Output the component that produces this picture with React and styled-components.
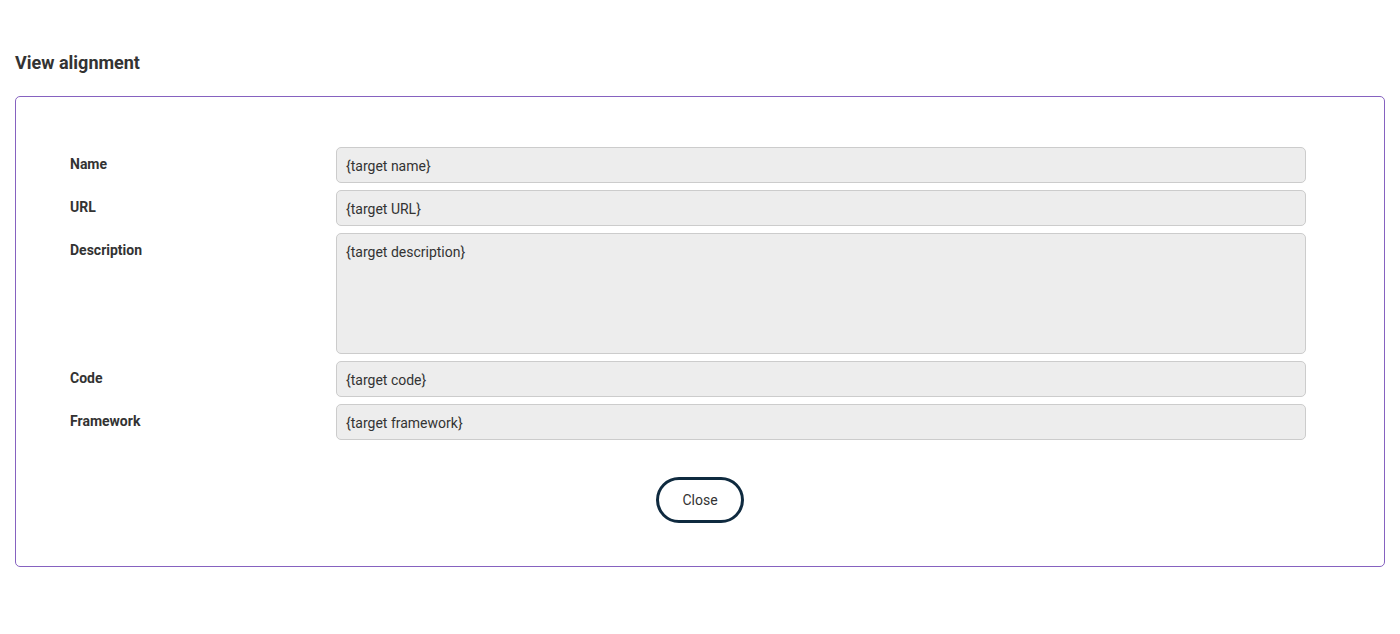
import React from "react";
import styled, { createGlobalStyle } from "styled-components";

const fields = [
  { label: "Name", value: "{target name}" },
  { label: "URL", value: "{target URL}" },
  { label: "Description", value: "{target description}", tall: true },
  { label: "Code", value: "{target code}" },
  { label: "Framework", value: "{target framework}" },
];

const App = () => {
  return (
    <Page>
      <GlobalStyle />
      <Title>View alignment</Title>
      <Card>
        <Form>
          {fields.map((f) => (
            <Row key={f.label}>
              <Label>{f.label}</Label>
              <Field $tall={f.tall}>{f.value}</Field>
            </Row>
          ))}
        </Form>
        <Actions>
          <CloseButton type="button">Close</CloseButton>
        </Actions>
      </Card>
    </Page>
  );
};

const GlobalStyle = createGlobalStyle`
  body {
    margin: 0;
    background: #ffffff;
    font-family: Roboto, "Liberation Sans", sans-serif;
    color: #333333;
  }
`;
const Page = styled.div`
  padding: 52px 15px 0 15px;
`;
const Title = styled.h2`
  margin: 0 0 22px 0;
  font-size: 18px;
  font-weight: 700;
  line-height: 22px;
  color: #333333;
`;
const Card = styled.div`
  border: 1px solid #8662c0;
  border-radius: 5px;
  padding: 50px 78px 43px 54px;
`;
const Form = styled.div`
  display: flex;
  flex-direction: column;
  gap: 7px;
`;
const Row = styled.div`
  display: grid;
  grid-template-columns: 266px 1fr;
  align-items: start;
`;
const Label = styled.div`
  font-size: 14px;
  font-weight: 700;
  padding-top: 9px;
  line-height: 16px;
  color: #333333;
`;
const Field = styled.div`
  box-sizing: border-box;
  height: ${(p) => (p.$tall ? "121px" : "36px")};
  background: #ededed;
  border: 1px solid #cccccc;
  border-radius: 5px;
  padding: 10px 9px 9px;
  font-size: 14px;
  line-height: 16px;
  color: #333333;
`;
const Actions = styled.div`
  display: flex;
  justify-content: center;
  margin-top: 37px;
  padding-left: 24px;
`;
const CloseButton = styled.button`
  width: 88px;
  height: 46px;
  border: 3px solid #0f2a3f;
  border-radius: 23px;
  background: #ffffff;
  font-family: Roboto, "Liberation Sans", sans-serif;
  font-size: 14px;
  color: #333333;
  cursor: pointer;
`;

export default App;
